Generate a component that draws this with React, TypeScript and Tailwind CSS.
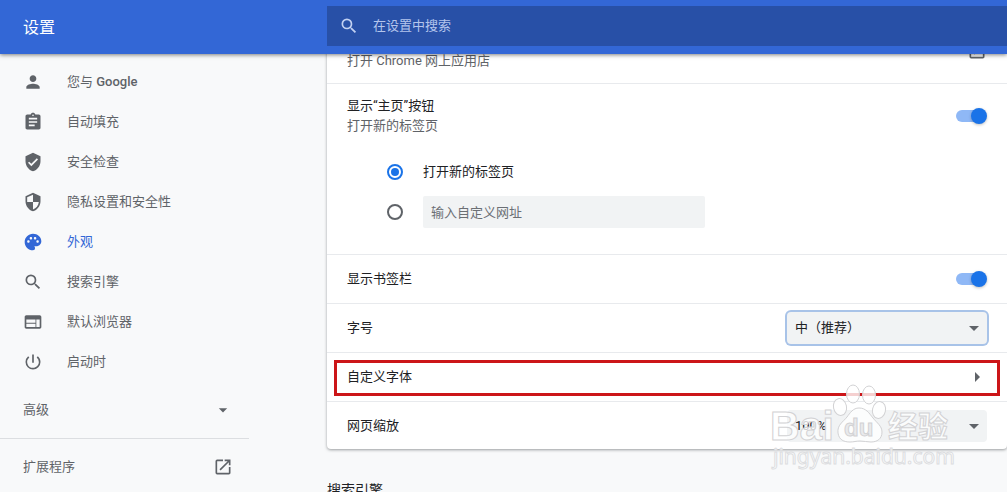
import type { ReactNode } from "react";
import type { IconType } from "react-icons";
import {
  MdArrowDropDown,
  MdArrowRight,
  MdAssignment,
  MdOpenInNew,
  MdPalette,
  MdPerson,
  MdPowerSettingsNew,
  MdSearch,
  MdSecurity,
  MdVerifiedUser,
  MdWeb,
} from "react-icons/md";

type NavItem = { icon: IconType; label: ReactNode; id: string; active?: boolean };

const navItems: NavItem[] = [
  { id: "people", icon: MdPerson, label: <>您与 <span className="font-medium">Google</span></> },
  { id: "autofill", icon: MdAssignment, label: "自动填充" },
  { id: "safetyCheck", icon: MdVerifiedUser, label: "安全检查" },
  { id: "privacy", icon: MdSecurity, label: "隐私设置和安全性" },
  { id: "appearance", icon: MdPalette, label: "外观", active: true },
  { id: "search", icon: MdSearch, label: "搜索引擎" },
  { id: "defaultBrowser", icon: MdWeb, label: "默认浏览器" },
  { id: "onStartup", icon: MdPowerSettingsNew, label: "启动时" },
];

function Header() {
  return (
    <header className="relative z-10 flex h-[54px] shrink-0 items-start bg-[#3367d6] pt-1.5 shadow-[0_1px_4px_rgba(0,0,0,0.5)]">
      <h1 className="w-[327px] shrink-0 pl-[23px] text-base leading-[44px] text-white">设置</h1>
      <label className="flex h-10 flex-1 items-center gap-3.5 bg-[#2850a7] pl-3 text-[#c2d1f2]">
        <MdSearch className="size-5 shrink-0" />
        <input
          type="search"
          aria-label="在设置中搜索"
          placeholder="在设置中搜索"
          className="min-w-0 flex-1 bg-transparent outline-none placeholder:text-[#b4c5ec]"
        />
      </label>
    </header>
  );
}

function Sidebar() {
  return (
    <nav className="w-[327px] shrink-0 pt-2 text-[#5f6368]">
      <ul>
        {navItems.map(({ id, icon: Icon, label, active }) => (
          <li key={id}>
            <a
              href={`#${id}`}
              className={
                active
                  ? "flex h-10 items-center gap-6 pl-[23px] text-[#3367d6]"
                  : "flex h-10 items-center gap-6 pl-[23px]"
              }
            >
              <Icon className="size-5 shrink-0" />
              <span>{label}</span>
            </a>
          </li>
        ))}
      </ul>
      <div className="w-[249px]">
        <button type="button" className="mt-1 flex h-12 w-full items-center justify-between pr-4 pl-[23px]">
          高级
          <MdArrowDropDown className="size-5" />
        </button>
        <div className="mt-1 border-t border-[#dcdee1]" />
        <a href="#extensions" className="mt-1 flex h-12 items-center justify-between pr-4 pl-[23px]">
          扩展程序
          <MdOpenInNew className="size-5" />
        </a>
      </div>
    </nav>
  );
}

function Toggle({ label }: { label: string }) {
  return (
    <input
      type="checkbox"
      role="switch"
      aria-label={label}
      defaultChecked
      className="relative h-4 w-8 shrink-0 appearance-none before:absolute before:top-0.5 before:left-px before:h-3 before:w-7 before:rounded-full before:bg-[#8fb8f6] after:absolute after:top-0 after:right-0 after:size-4 after:rounded-full after:bg-[#1a73e8] after:shadow-[0_1px_3px_rgba(0,0,0,0.25)]"
    />
  );
}

const radioClass =
  "grid size-4 shrink-0 appearance-none place-items-center rounded-full border-2 border-[#5f6368] checked:border-[#1a73e8] checked:before:size-2 checked:before:rounded-full checked:before:bg-[#1a73e8]";

function Select({ id, options, focused }: { id: string; options: string[]; focused?: boolean }) {
  return (
    <div className="relative w-[200px] shrink-0">
      <select
        id={id}
        className={
          focused
            ? "h-8 w-full appearance-none rounded bg-[#f1f3f4] px-2 ring-2 ring-[#a8c3e8] outline-none"
            : "h-8 w-full appearance-none rounded bg-[#f1f3f4] px-2 outline-none"
        }
      >
        {options.map((option) => (
          <option key={option}>{option}</option>
        ))}
      </select>
      <MdArrowDropDown className="pointer-events-none absolute top-1 right-px size-6 text-[#5f6368]" />
    </div>
  );
}

function Watermark() {
  return (
    <svg
      viewBox="0 0 200 90"
      className="pointer-events-none absolute right-12 -bottom-[23px] h-[90px] w-[200px]"
      fill="#ffffff"
      fillOpacity="0.8"
      stroke="#d2d2d4"
      strokeWidth="1"
      aria-hidden="true"
    >
      <ellipse cx="94" cy="12" rx="6.5" ry="9" />
      <ellipse cx="110" cy="13" rx="6.5" ry="9" />
      <ellipse cx="81" cy="25" rx="6.5" ry="8.5" transform="rotate(-12 81 25)" />
      <ellipse cx="120" cy="28" rx="6.5" ry="8.5" transform="rotate(12 120 28)" />
      <path d="M100 26c-6 0-9 5-12 9-4 5-10 8-9 16 1 7 6 9 12 9 4 0 6-1 10-1s7 1 11 1c6 0 11-3 11-10 0-6-5-9-9-14-4-5-7-10-14-10z" />
      <text x="11" y="58" fontFamily="Liberation Sans, sans-serif" fontWeight="700" fontSize="41">Bai</text>
      <text x="85" y="54" fontFamily="Liberation Sans, sans-serif" fontWeight="700" fontSize="24" fill="#e4e5e8">du</text>
      <text x="129" y="55" fontFamily="Noto Sans CJK SC, sans-serif" fontWeight="700" fontSize="30">经验</text>
      <text x="14" y="82" fontFamily="Noto Sans, sans-serif" fontSize="21" stroke="#dcdde0">jingyan.baidu.com</text>
    </svg>
  );
}

function AppearanceCard() {
  return (
    <section className="relative -mt-[35px] rounded bg-white text-[#202124] shadow-[0_1px_3px_rgba(60,64,67,0.5)]">
      <a href="#themes" className="flex h-16 items-center justify-between px-5 text-[#5f6368]">
        <span className="pt-5">打开 Chrome 网上应用店</span>
        <MdOpenInNew className="size-5" />
      </a>

      <div className="border-t border-[#e8eaed]">
        <div className="flex h-16 items-center justify-between px-5">
          <div className="leading-5">
            <div>显示“主页”按钮</div>
            <div className="text-[#5f6368]">打开新的标签页</div>
          </div>
          <Toggle label="显示“主页”按钮" />
        </div>
        <div className="pt-1 pb-[22px] pl-[60px]">
          <label className="flex h-10 items-center gap-5">
            <input type="radio" name="home" defaultChecked className={radioClass} />
            打开新的标签页
          </label>
          <div className="flex h-10 items-center gap-5">
            <input type="radio" name="home" aria-label="输入自定义网址" className={radioClass} />
            <input
              type="text"
              aria-label="输入自定义网址"
              placeholder="输入自定义网址"
              className="h-8 w-[282px] rounded-xs bg-[#f1f3f4] px-2 outline-none placeholder:text-[#6b6f74]"
            />
          </div>
        </div>
      </div>

      <div className="flex h-[49px] items-center justify-between border-t border-[#e8eaed] px-5">
        显示书签栏
        <Toggle label="显示书签栏" />
      </div>

      <div className="flex h-[49px] items-center justify-between border-t border-[#e8eaed] px-5">
        <label htmlFor="font-size">字号</label>
        <Select id="font-size" options={["中（推荐）", "小", "大"]} focused />
      </div>

      <div className="relative border-t border-[#e8eaed]">
        <button type="button" className="flex h-12 w-full items-center justify-between pr-[18px] pl-5">
          自定义字体
          <MdArrowRight className="size-6 text-[#5f6368]" />
        </button>
        <div className="pointer-events-none absolute inset-x-[7px] top-[7px] h-9 border-3 border-[#cc1518]" />
      </div>

      <div className="flex h-12 items-center justify-between border-t border-[#e8eaed] px-5">
        <label htmlFor="zoom">网页缩放</label>
        <Select id="zoom" options={["100%", "110%", "125%"]} />
      </div>
      <Watermark />
    </section>
  );
}

export default function App() {
  return (
    <div className="flex h-screen flex-col overflow-hidden bg-[#f8f9fa] font-['Roboto','Noto_Sans_CJK_SC',sans-serif] text-[13px] leading-5">
      <Header />
      <div className="flex min-h-0 flex-1">
        <Sidebar />
        <main className="min-w-0 flex-1">
          <AppearanceCard />
          <h2 className="mt-[31px] text-sm text-[#202124]">搜索引擎</h2>
        </main>
      </div>
    </div>
  );
}
